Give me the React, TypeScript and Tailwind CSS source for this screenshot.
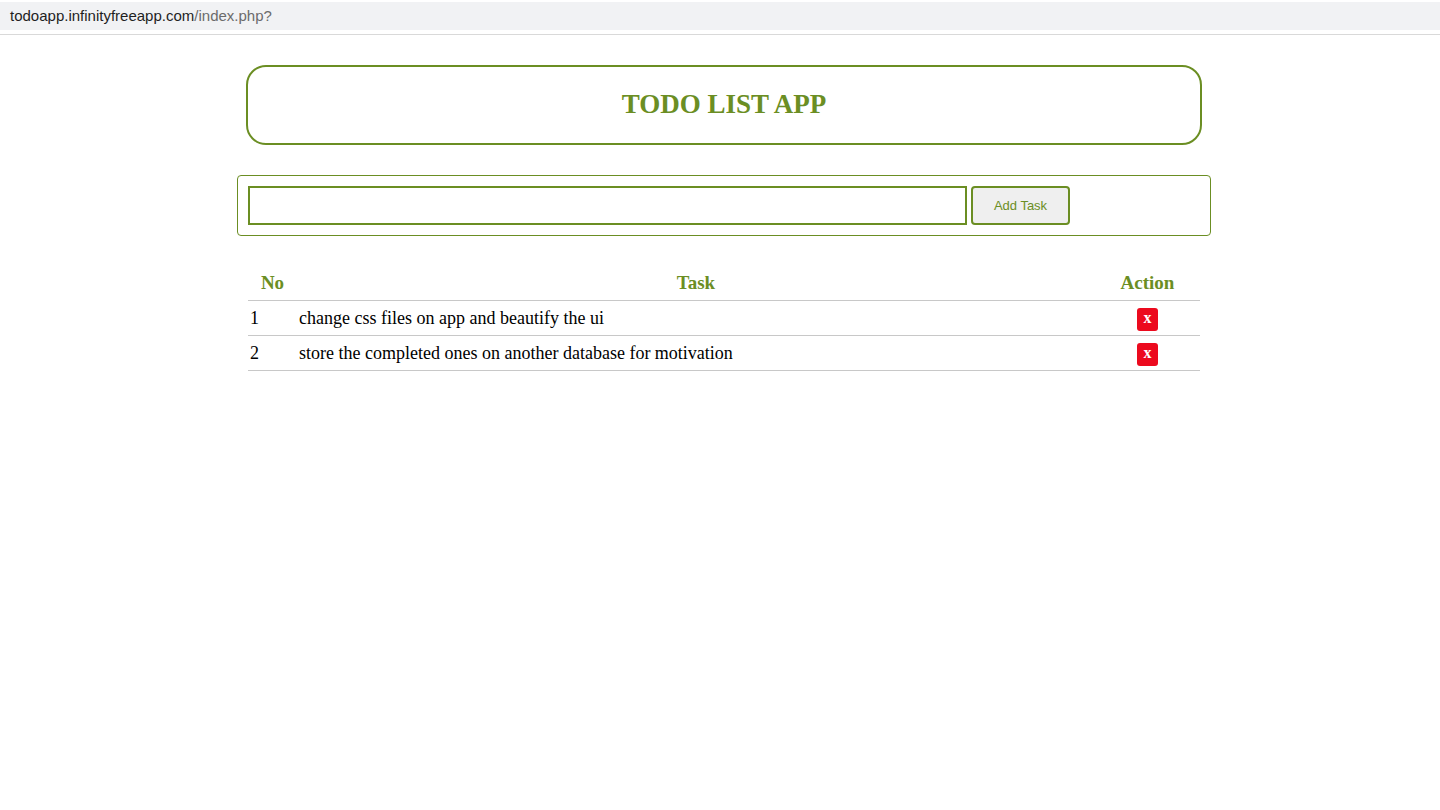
import React from "react";

const tasks = [
  "change css files on app and beautify the ui",
  "store the completed ones on another database for motivation",
];

export default function App() {
  return (
    <div className="min-h-[810px] w-[1440px] bg-white">
      <div className="h-[35px] border-b border-[#d9d9d9] bg-white pt-[2px]">
        <div className="flex h-[28px] items-center bg-[#f1f2f4] pl-[10px] text-[15px] font-['Liberation_Sans',Arial,sans-serif]">
          <span className="text-[#1f1f1f]">todoapp.infinityfreeapp.com</span>
          <span className="text-[#6b6b6b]">/index.php?</span>
        </div>
      </div>
      <div className="ml-[237px] w-[974px] pt-[30px] font-['Liberation_Serif','Times_New_Roman',serif]">
        <div className="mx-[9px] flex h-[80px] items-center justify-center rounded-[20px] border-2 border-[#6b8e23] pb-[2px]">
          <h1 className="text-[27px] font-bold text-[#6b8e23]">TODO LIST APP</h1>
        </div>
        <div className="mt-[30px] flex h-[61px] items-center gap-[4px] rounded-[4px] border border-[#6b8e23] px-[10px]">
          <input className="h-[39px] w-[719px] border-2 border-[#6b8e23] outline-none" />
          <button className="h-[39px] w-[99px] rounded-[4px] border-2 border-[#6b8e23] bg-[#efefef] text-[13px] text-[#6b8e23] font-['Liberation_Sans',Arial,sans-serif]">
            Add Task
          </button>
        </div>
        <table className="mx-[11px] mt-[29px] w-[952px] border-collapse text-[18px]">
          <thead>
            <tr className="h-[35px] border-b border-[#c8c8c8]">
              <th className="w-[49px] pt-[2px] text-center text-[19px] font-bold text-[#6b8e23]">No</th>
              <th className="pt-[2px] text-center text-[19px] font-bold text-[#6b8e23]">Task</th>
              <th className="w-[105px] pt-[2px] text-center text-[19px] font-bold text-[#6b8e23]">Action</th>
            </tr>
          </thead>
          <tbody>
            {tasks.map((t, i) => (
              <tr key={i} className="h-[35px] border-b border-[#c8c8c8]">
                <td className="pl-[2px] pt-[1px] text-left text-black">{i + 1}</td>
                <td className="pl-[2px] pt-[1px] text-left text-black">{t}</td>
                <td className="text-center">
                  <button className="inline-flex h-[23px] w-[21px] items-center justify-center rounded-[3px] bg-[#ec0a1e] pb-[3px] text-[16px] font-bold text-white">
                    x
                  </button>
                </td>
              </tr>
            ))}
          </tbody>
        </table>
      </div>
    </div>
  );
}
